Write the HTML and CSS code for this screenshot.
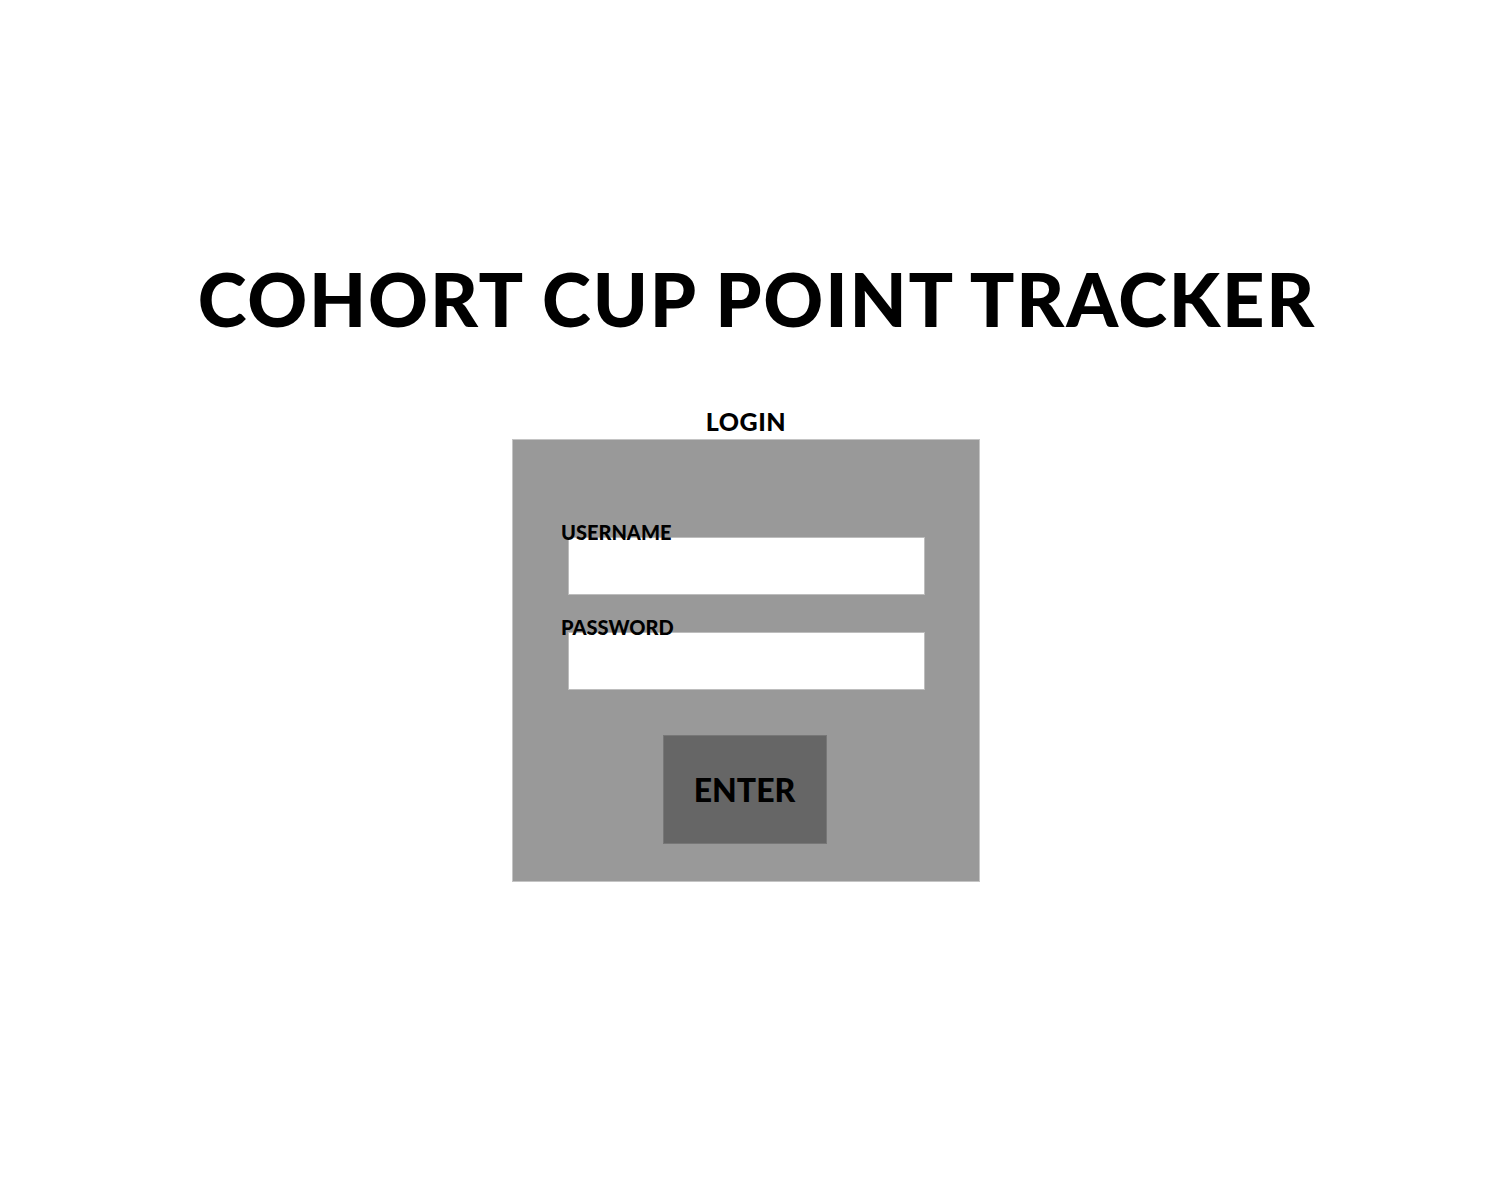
FILE: index.html
```html
<!DOCTYPE html>
<html lang="en">
<head>
<meta charset="utf-8">
<title>Cohort Cup Point Tracker</title>
<link rel="stylesheet" href="styles.css">
</head>
<body>
<main class="page">
  <h1 class="title">COHORT CUP POINT TRACKER</h1>
  <section class="login">
    <h2 class="login-heading">LOGIN</h2>
    <form class="panel">
      <label class="field-label" for="username">USERNAME</label>
      <input class="field-input" id="username" type="text">
      <label class="field-label second" for="password">PASSWORD</label>
      <input class="field-input" id="password" type="password">
      <button class="enter" type="button">ENTER</button>
    </form>
  </section>
</main>
</body>
</html>
```
FILE: styles.css
```css
html, body {
  margin: 0;
  padding: 0;
  background: #ffffff;
}

.page {
  width: 1500px;
  height: 1200px;
  display: flex;
  flex-direction: column;
  align-items: center;
  font-family: "Lato", "Liberation Sans", sans-serif;
  color: #000;
}

.title {
  margin: 262px 0 0 14px;
  font-size: 74px;
  line-height: 1;
  font-weight: 900;
  letter-spacing: 1.8px;
  white-space: nowrap;
}

.login {
  margin: 73px 8px 0 0;
  width: 468px;
  display: flex;
  flex-direction: column;
  align-items: center;
}

.login-heading {
  margin: 0 0 5px;
  font-size: 25px;
  line-height: 1;
  font-weight: 900;
  letter-spacing: 0.5px;
}

.panel {
  box-sizing: border-box;
  width: 468px;
  height: 443px;
  background: #999999;
  border: 1px solid #c4c4c4;
  padding: 82px 55px 0 48px;
  display: flex;
  flex-direction: column;
  align-items: flex-start;
}

.field-label {
  position: relative;
  z-index: 1;
  font-size: 20px;
  line-height: 1;
  font-weight: 900;
  margin-bottom: -5px;
}

.field-label.second {
  margin-top: 22px;
}

.field-input {
  box-sizing: border-box;
  margin: 0 0 0 7px;
  width: 357px;
  height: 58px;
  border: 1px solid #bdbdbd;
  background: #ffffff;
  padding: 0;
  outline: none;
}

.enter {
  box-sizing: border-box;
  align-self: center;
  margin: 45px 0 0 4px;
  width: 164px;
  height: 109px;
  background: #666666;
  border: 1px solid #777777;
  color: #000;
  font-family: "Lato", "Liberation Sans", sans-serif;
  font-size: 32px;
  font-weight: 900;
  line-height: 1;
  padding: 0;
}
```
